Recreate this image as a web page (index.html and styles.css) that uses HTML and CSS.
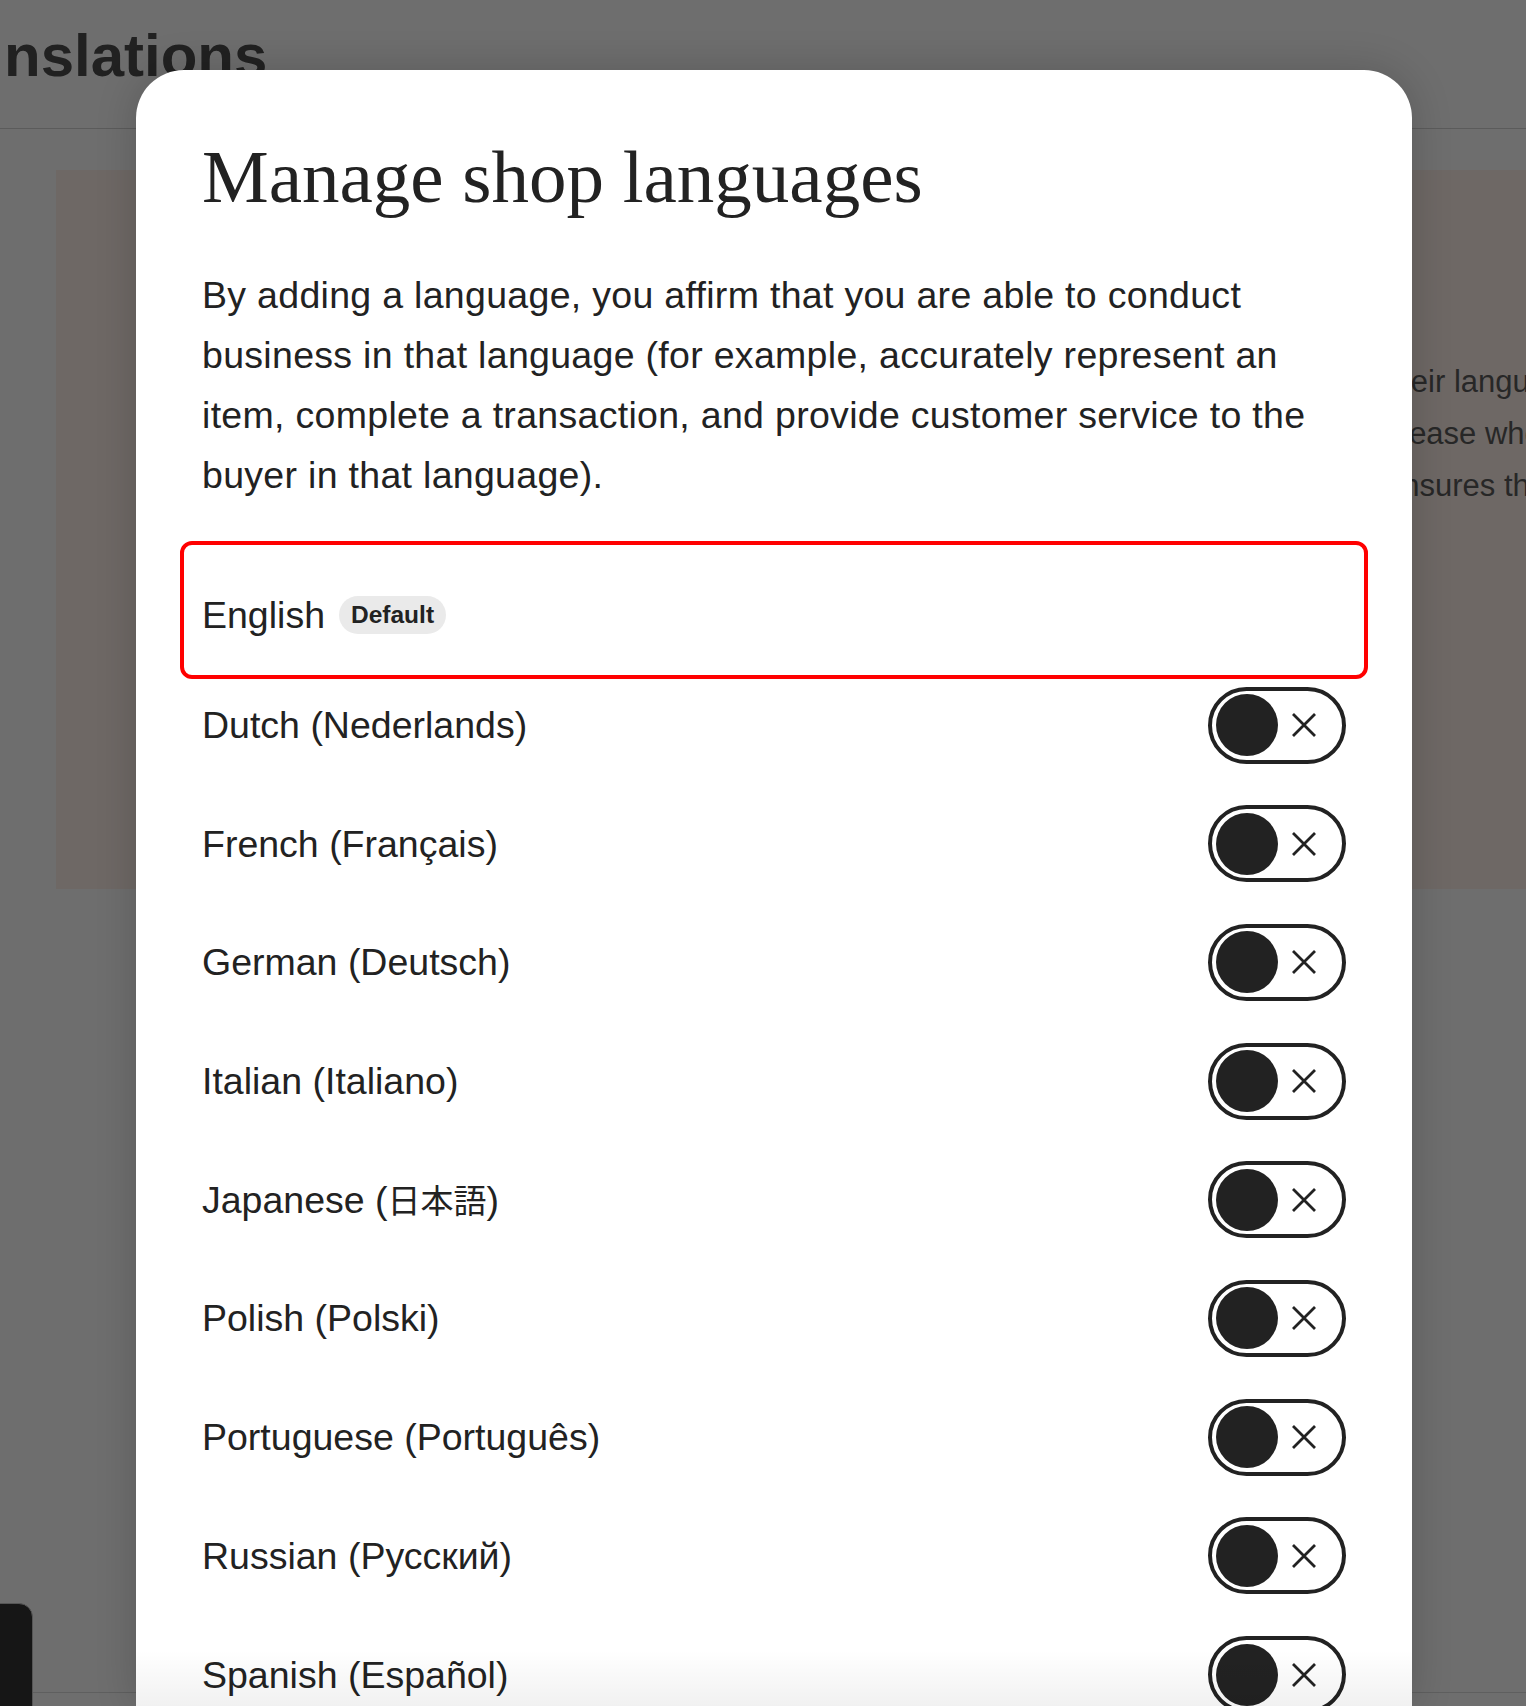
FILE: index.html
```html
<!DOCTYPE html>
<html lang="en">
<head>
<meta charset="utf-8">
<title>Manage shop languages</title>
<link rel="stylesheet" href="styles.css">
</head>
<body>
<div class="page">
  <header class="page-header">
    <h1 class="page-title">nslations</h1>
  </header>
  <section class="card">
    <div class="card-text">
      <p>their language and make</p>
      <p>please when you</p>
      <p>ensures the best</p>
    </div>
  </section>
  <footer class="page-footer"></footer>
  <div class="help-btn"></div>
</div>
<div class="overlay"></div>
<div class="modal" role="dialog" aria-label="Manage shop languages">
  <h2 class="modal-title">Manage shop languages</h2>
  <p class="modal-desc">By adding a language, you affirm that you are able to conduct business in that language (for example, accurately represent an item, complete a transaction, and provide customer service to the buyer in that language).</p>
  <ul class="lang-list">
    <li class="lang-row">
      <span class="lang-name">English</span>
      <span class="badge">Default</span>
      <span class="highlight"></span>
    </li>
    <li class="lang-row">
      <span class="lang-name">Dutch (Nederlands)</span>
      <span class="toggle"><span class="knob"></span><svg class="toggle-x" viewBox="0 0 26 26"><path d="M2 2L24 24M24 2L2 24"/></svg></span>
    </li>
    <li class="lang-row">
      <span class="lang-name">French (Français)</span>
      <span class="toggle"><span class="knob"></span><svg class="toggle-x" viewBox="0 0 26 26"><path d="M2 2L24 24M24 2L2 24"/></svg></span>
    </li>
    <li class="lang-row">
      <span class="lang-name">German (Deutsch)</span>
      <span class="toggle"><span class="knob"></span><svg class="toggle-x" viewBox="0 0 26 26"><path d="M2 2L24 24M24 2L2 24"/></svg></span>
    </li>
    <li class="lang-row">
      <span class="lang-name">Italian (Italiano)</span>
      <span class="toggle"><span class="knob"></span><svg class="toggle-x" viewBox="0 0 26 26"><path d="M2 2L24 24M24 2L2 24"/></svg></span>
    </li>
    <li class="lang-row">
      <span class="lang-name">Japanese (<span class="cjk">日本語</span>)</span>
      <span class="toggle"><span class="knob"></span><svg class="toggle-x" viewBox="0 0 26 26"><path d="M2 2L24 24M24 2L2 24"/></svg></span>
    </li>
    <li class="lang-row">
      <span class="lang-name">Polish (Polski)</span>
      <span class="toggle"><span class="knob"></span><svg class="toggle-x" viewBox="0 0 26 26"><path d="M2 2L24 24M24 2L2 24"/></svg></span>
    </li>
    <li class="lang-row">
      <span class="lang-name">Portuguese (Português)</span>
      <span class="toggle"><span class="knob"></span><svg class="toggle-x" viewBox="0 0 26 26"><path d="M2 2L24 24M24 2L2 24"/></svg></span>
    </li>
    <li class="lang-row">
      <span class="lang-name">Russian (Русский)</span>
      <span class="toggle"><span class="knob"></span><svg class="toggle-x" viewBox="0 0 26 26"><path d="M2 2L24 24M24 2L2 24"/></svg></span>
    </li>
    <li class="lang-row">
      <span class="lang-name">Spanish (Español)</span>
      <span class="toggle"><span class="knob"></span><svg class="toggle-x" viewBox="0 0 26 26"><path d="M2 2L24 24M24 2L2 24"/></svg></span>
    </li>
  </ul>
</div>
</body>
</html>
```

FILE: styles.css
```css
html, body {
  margin: 0;
  padding: 0;
  height: 1706px;
  overflow: hidden;
}

body {
  position: relative;
  background: #ffffff;
  color: #222222;
  font-family: "Liberation Sans", Arial, "Noto Sans CJK JP", sans-serif;
}

/* ---------- background page ---------- */
.page {
  height: 1706px;
  display: flex;
  flex-direction: column;
}

.page-header {
  height: 129px;
  box-sizing: border-box;
  border-bottom: 1px solid #c8c8c8;
  flex-shrink: 0;
}

.page-title {
  margin: 0;
  padding: 19px 0 0 4px;
  font-size: 60px;
  line-height: 74px;
  font-weight: 700;
  color: #222222;
}

.card {
  margin: 41px 0 0 56px;
  height: 719px;
  background: #ffeee5;
  overflow: hidden;
  flex-shrink: 0;
  padding: 186px 0 0 1329px;
  box-sizing: border-box;
}

.card-text {
  white-space: nowrap;
  font-size: 31px;
  line-height: 52px;
  color: #333333;
}

.card-text p {
  margin: 0;
}

.page-footer {
  margin-top: auto;
  height: 14px;
  box-sizing: border-box;
  border-top: 1px solid #d2d2d2;
}

.help-btn {
  position: absolute;
  left: -40px;
  top: 1603px;
  width: 73px;
  height: 130px;
  border-radius: 14px;
  background: #000000;
  border: 1px solid #b8b8b8;
  box-sizing: border-box;
}

.overlay {
  position: absolute;
  inset: 0;
  background: rgba(34, 34, 34, 0.656);
}

/* ---------- modal ---------- */
.modal {
  position: absolute;
  top: 70px;
  left: 136px;
  width: 1276px;
  bottom: 0;
  box-sizing: border-box;
  padding: 62px 66px 0;
  background: #ffffff;
  border-radius: 48px 48px 0 0;
  overflow: hidden;
  box-shadow: 0 0 40px rgba(0, 0, 0, 0.18);
}

.modal::after {
  content: "";
  position: absolute;
  left: 0;
  right: 0;
  bottom: 0;
  height: 56px;
  background: linear-gradient(rgba(0, 0, 0, 0), rgba(0, 0, 0, 0.055));
  pointer-events: none;
}

.modal-title {
  margin: 0;
  font-family: "Liberation Serif", "Times New Roman", serif;
  font-size: 75px;
  line-height: 90px;
  font-weight: 400;
  color: #222222;
}

.modal-desc {
  margin: 43px 0 59px;
  max-width: 1136px;
  font-size: 37.5px;
  line-height: 60px;
  letter-spacing: 0.3px;
  color: #222222;
}

.lang-list {
  list-style: none;
  margin: 0;
  padding: 0;
}

.lang-row {
  position: relative;
  display: flex;
  align-items: center;
  padding: 20.85px 0;
}

.lang-name {
  font-size: 37.5px;
  line-height: 60px;
  color: #222222;
}

.cjk {
  font-family: "Noto Sans CJK JP", sans-serif;
  font-size: 33px;
}

.badge {
  margin-left: 14px;
  height: 38px;
  padding: 0 12px;
  border-radius: 19px;
  background: #eaeaea;
  font-size: 24.5px;
  line-height: 38px;
  font-weight: 700;
  color: #222222;
}

.highlight {
  position: absolute;
  top: -23px;
  left: -22px;
  right: -22px;
  bottom: -13px;
  border: 4px solid #ff0000;
  border-radius: 12px;
  pointer-events: none;
}

.toggle {
  margin-left: auto;
  flex-shrink: 0;
  width: 138px;
  height: 77px;
  box-sizing: border-box;
  border: 4px solid #222222;
  border-radius: 40px;
  padding: 0 4px;
  display: flex;
  align-items: center;
  background: #ffffff;
}

.knob {
  width: 62px;
  height: 62px;
  border-radius: 50%;
  background: #222222;
  flex-shrink: 0;
}

.toggle-x {
  width: 26px;
  height: 26px;
  margin-left: 13px;
  fill: none;
  stroke: #222222;
  stroke-width: 2.8;
}
```
